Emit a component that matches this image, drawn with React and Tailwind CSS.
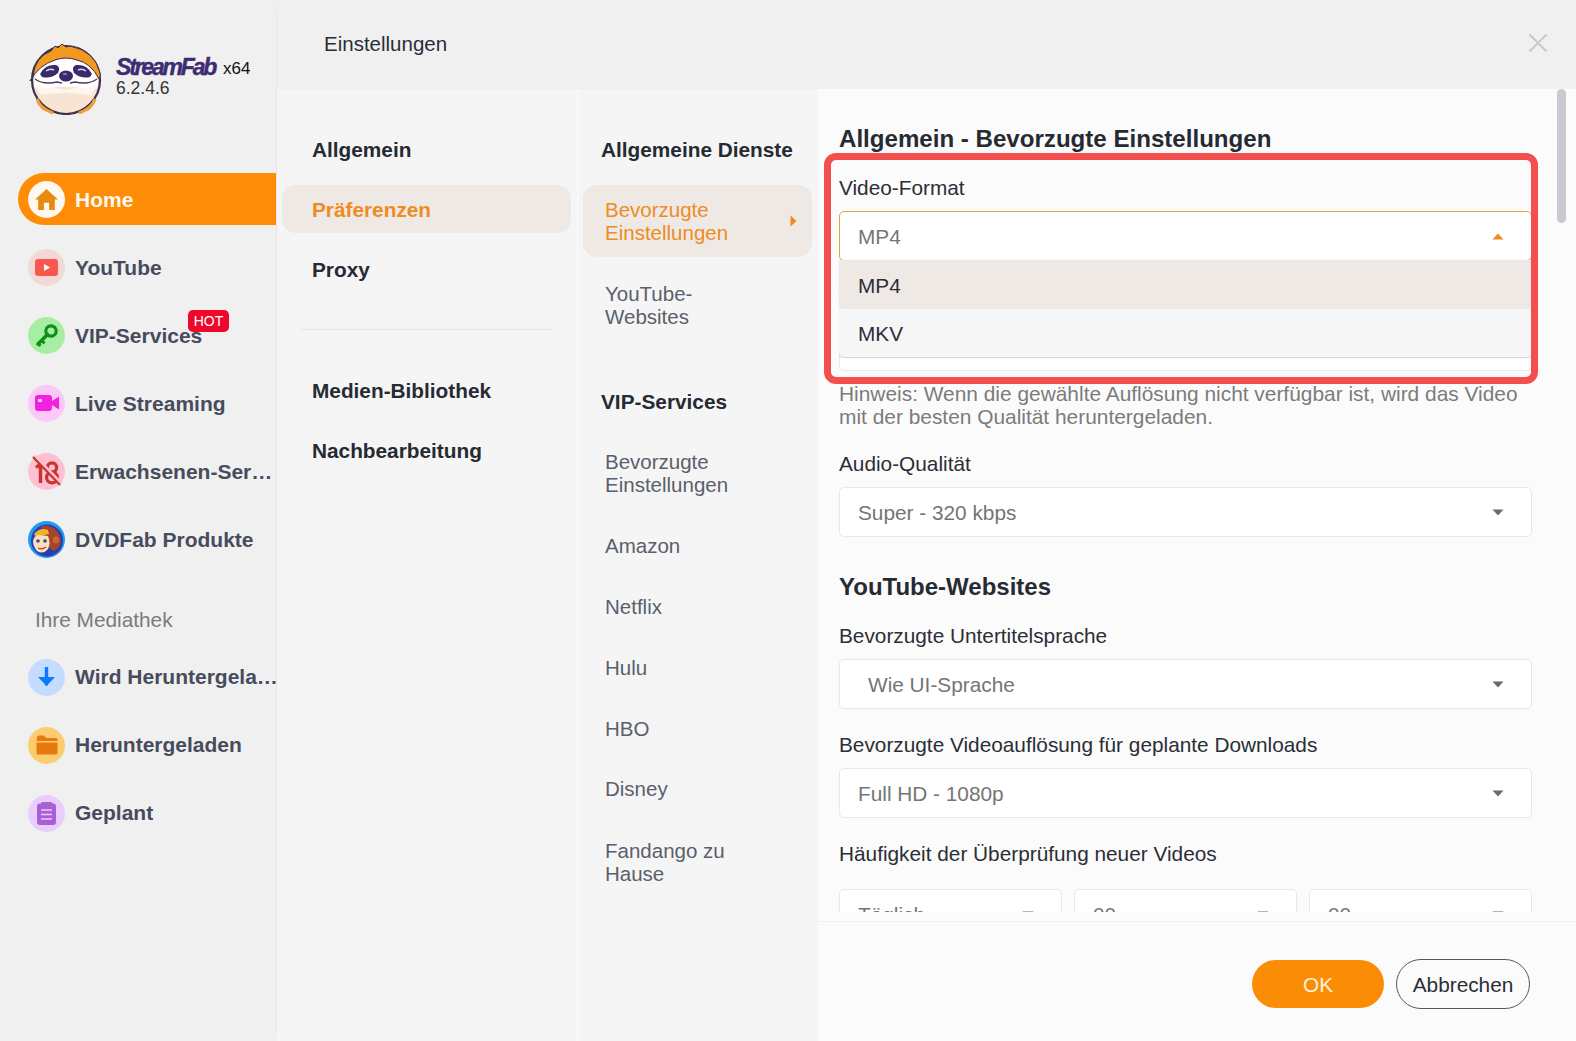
const Caret = ({ up }) => (
  <svg width="12" height="7" viewBox="0 0 12 7" className="shrink-0">
    {up ? <path d="M6 0.5 L11.5 6.5 H0.5 Z" fill="#f08a1c" /> : <path d="M0.5 0.5 H11.5 L6 6.5 Z" fill="#6b6b6b" />}
  </svg>
);

const Select = ({ value, indent, className = "" }) => (
  <div className={`flex h-[50px] items-center justify-between rounded-[5px] border border-[#e8e8e8] bg-white pr-[27px] text-[#757575] ${indent ? "pl-[28px]" : "pl-[18px]"} ${className}`}>
    <span className="pt-[1px]">{value}</span>
    <Caret />
  </div>
);

const Label = ({ children, className = "" }) => (
  <div className={`flex h-[24px] items-center text-[#2b2e36] ${className}`}>{children}</div>
);

const Circle = ({ bg, children }) => (
  <span className={`flex h-[37px] w-[37px] shrink-0 items-center justify-center rounded-full ${bg}`}>{children}</span>
);

const HomeIcon = () => (
  <svg width="25" height="25" viewBox="0 0 24 24"><path d="M12 2 L23 12 H20 V22 H14.5 V15 H9.5 V22 H4 V12 H1 Z" fill="#e68a12" /></svg>
);
const YtIcon = () => (
  <svg width="23" height="17" viewBox="0 0 23 17"><rect width="23" height="17" rx="3" fill="#f8584c" /><path d="M9 5 L15 8.5 L9 12 Z" fill="#fff" /></svg>
);
const KeyIcon = () => (
  <svg width="24" height="24" viewBox="0 0 24 24">
    <circle cx="16" cy="8" r="5.2" fill="none" stroke="#0f8f1a" strokeWidth="3.2" />
    <path d="M12.5 11.5 L3 21" stroke="#0f8f1a" strokeWidth="3.6" strokeLinecap="round" />
    <path d="M6.5 17 L9.5 20.5 M3 20 L5.5 23" stroke="#0f8f1a" strokeWidth="2.8" />
  </svg>
);
const CamIcon = () => (
  <svg width="24" height="16" viewBox="0 0 24 16"><rect width="17" height="16" rx="3" fill="#f221df" /><path d="M17 6 L24 1.5 V14.5 L17 10 Z" fill="#f221df" /><rect x="3" y="4" width="4" height="3" fill="#fcc8f8" /></svg>
);
const AdultIcon = () => (
  <svg width="37" height="37" viewBox="0 0 37 37">
    <path d="M8 14.5 L12.5 11 V30" fill="none" stroke="#c9342c" strokeWidth="3.4" />
    <circle cx="24" cy="14.5" r="4.6" fill="none" stroke="#c9342c" strokeWidth="3.2" />
    <circle cx="24" cy="24.5" r="5.4" fill="none" stroke="#c9342c" strokeWidth="3.2" />
    <path d="M6 3 L33 31" stroke="#fdc1d2" strokeWidth="4.4" />
    <path d="M5 4 L32 32" stroke="#c9342c" strokeWidth="2.2" />
  </svg>
);
const MascotIcon = () => (
  <svg width="37" height="37" viewBox="0 0 37 37" className="shrink-0">
    <circle cx="18.5" cy="18.5" r="18.5" fill="#1f9bf0" />
    <circle cx="19" cy="19.5" r="16" fill="#2a3cb4" />
    <path d="M13 5 Q27 3 32 15 Q35 26 26 30 Q20 28 16 16 Z" fill="#a3452a" />
    <circle cx="28" cy="19" r="3.4" fill="#c9633a" />
    <path d="M6 13 Q12 6 20 9 L21 13 L8 16 Z" fill="#edb524" />
    <path d="M5 20 Q6 14 12 14 L20 15 Q23 22 20 28 Q15 34 9 30 Q5 25 5 20 Z" fill="#fbdfbd" />
    <circle cx="10" cy="20" r="1.8" fill="#24507c" /><circle cx="17" cy="20" r="1.8" fill="#24507c" />
    <path d="M10 27 Q14 29 18 26" stroke="#a5402a" strokeWidth="1.2" fill="none" />
  </svg>
);
const DownIcon = () => (
  <svg width="19" height="20" viewBox="0 0 19 20"><path d="M9.5 1 V17" stroke="#0a7bff" strokeWidth="3.4" strokeLinecap="round" /><path d="M1 10 H18 L9.5 19 Z" fill="#0a7bff" /></svg>
);
const FolderIcon = () => (
  <svg width="22" height="20" viewBox="0 0 22 20"><path d="M1 2 a1.5 1.5 0 0 1 1.5 -1.5 H8 L10.5 3 H20 a1.5 1.5 0 0 1 1.5 1.5 V6 H0.5 Z" fill="#e67a0e" /><path d="M0.5 7.5 H21.5 V18 a1.5 1.5 0 0 1 -1.5 1.5 H2 a1.5 1.5 0 0 1 -1.5 -1.5 Z" fill="#e67a0e" /></svg>
);
const ClipIcon = () => (
  <svg width="19" height="23" viewBox="0 0 19 23"><rect y="1.5" width="19" height="21.5" rx="3" fill="#a95fd6" /><rect x="4" y="0" width="11" height="3" rx="1" fill="#a95fd6" /><path d="M4 8 H15 M4 12.5 H15 M4 17 H15" stroke="#e9cdfc" strokeWidth="1.7" /></svg>
);

const Logo = () => (
  <svg width="74" height="72" viewBox="0 0 74 72" className="shrink-0">
    <circle cx="37" cy="37" r="34" fill="#f8e4d2" stroke="#3d2f4e" strokeWidth="2.2" />
    <path d="M8 56 Q12 66 24 70 L15 66 Q10 62 8 56 Z M66 56 Q62 66 50 70 L59 66 Q64 62 66 56 Z" fill="#eda03a" stroke="#eda03a" strokeWidth="3" />
    <path d="M5 38 Q8 18 37 16 Q66 18 69 38 Q70 48 58 46 Q37 41 16 46 Q4 48 5 38 Z" fill="#fff" />
    <path d="M7 41 Q14 46 26 45 L37 47 L48 45 Q60 46 67 41 Q66 48 62 52 Q37 48 12 52 Q8 48 7 41 Z" fill="#fdf6ee" />
    <path d="M1 38 L4 33 Q6 14 22 8 L26 3 L29 5 L33 1 L37 4 L41 3 Q66 8 71 30 Q72 33 70 36 Q62 20 48 17 Q37 13 26 17 Q10 22 1 38 Z" fill="#f29a1e" stroke="#3d2f4e" strokeWidth="1" strokeLinejoin="round" />
    <path d="M11 31 Q16 21 27 22 Q32 24 29 30 Q22 36 13 34 Z" fill="#3a2a6a" />
    <path d="M63 31 Q58 21 47 22 Q42 24 45 30 Q52 36 61 34 Z" fill="#3a2a6a" />
    <path d="M17 28 Q21 25 25 27" stroke="#d8d2ea" strokeWidth="1.4" fill="none" />
    <path d="M57 28 Q53 25 49 27" stroke="#d8d2ea" strokeWidth="1.4" fill="none" />
    <ellipse cx="37" cy="33" rx="7" ry="5.5" fill="#3a2a6a" />
    <ellipse cx="36" cy="31" rx="2.2" ry="1.1" fill="#8f84b8" />
    <path d="M6 36 Q14 42 28 39 L33 40 M68 36 Q60 42 46 39 L41 40" stroke="#4a3a5c" strokeWidth="1.4" fill="none" />
  </svg>
);

const NavItem = ({ icon, label, active, truncateW, badge, lower }) => (
  <div className={`relative flex h-[52px] items-center gap-[10px] ${active ? "ml-[18px] rounded-l-[26px] bg-[#ff8c06] pl-[10px] text-[#fff8ee]" : "ml-[28px] text-[#474c5c]"}`}>
    {icon}
    <span className={`shrink-0 whitespace-nowrap text-[21px] font-bold ${lower ? "" : "pt-[2px]"} ${truncateW || ""}`}>{label}</span>
    {badge && (
      <span className="absolute left-[160px] top-[1px] flex h-[22px] w-[41px] items-center justify-center rounded-[5px] bg-[#f0082c] text-[14px] text-white">HOT</span>
    )}
  </div>
);

const Sidebar = () => (
  <aside className="relative z-10 flex h-full w-[276px] shrink-0 flex-col bg-[#f0f0f0]">
    <div className="flex h-[173px] items-start pl-[29px] pt-[43px]">
      <Logo />
      <div className="ml-[13px] flex flex-col pt-[13px]">
        <div className="flex h-[22px] items-center">
          <span className="text-[23px] font-bold italic tracking-[-2.2px] text-[#3d2c72] [-webkit-text-stroke:0.4px_#3d2c72]">StreamFab</span>
          <span className="ml-[8px] mt-[4px] text-[17px] text-[#111]">x64</span>
        </div>
        <span className="-mt-[1px] text-[17.5px] leading-[22px] text-[#333]">6.2.4.6</span>
      </div>
    </div>
    <nav className="flex flex-col gap-[16px]">
      <NavItem active label="Home" icon={<Circle bg="bg-[#fff8ee]"><HomeIcon /></Circle>} />
      <NavItem label="YouTube" icon={<Circle bg="bg-[#f3d8d8]"><YtIcon /></Circle>} />
      <NavItem label="VIP-Services" badge icon={<Circle bg="bg-[#a6efa2]"><KeyIcon /></Circle>} />
      <NavItem label="Live Streaming" icon={<Circle bg="bg-[#fcc8f8]"><CamIcon /></Circle>} />
      <NavItem label="Erwachsenen-Services" truncateW="w-[199px] truncate" icon={<Circle bg="bg-[#fdc1d2]"><AdultIcon /></Circle>} />
      <NavItem label="DVDFab Produkte" icon={<MascotIcon />} />
    </nav>
    <div className="ml-[35px] mt-[41px] flex h-[28px] items-center text-[20.8px] text-[#7b7b7b]">Ihre Mediathek</div>
    <nav className="mt-[17px] flex flex-col gap-[16px]">
      <NavItem lower label="Wird Heruntergeladen" truncateW="w-[204px] truncate" icon={<Circle bg="bg-[#c4dcff]"><DownIcon /></Circle>} />
      <NavItem lower label="Heruntergeladen" icon={<Circle bg="bg-[#fccc70]"><FolderIcon /></Circle>} />
      <NavItem lower label="Geplant" icon={<Circle bg="bg-[#e9cdfc]"><ClipIcon /></Circle>} />
    </nav>
  </aside>
);

const Col2Item = ({ children, active }) => (
  <div className={`flex h-[48px] items-center rounded-[14px] pl-[30px] pt-[2px] text-[20.8px] font-bold ${active ? "bg-[#eee9e5] text-[#ee8c22]" : "text-[#262a33]"}`}>{children}</div>
);

const Col3Head = ({ children, className = "" }) => (
  <div className={`flex h-[48px] items-center pl-[18px] pt-[2px] text-[20.8px] font-bold text-[#262a33] ${className}`}>{children}</div>
);

const Col3Item = ({ children }) => (
  <div className="flex min-h-[48px] items-center pl-[22px] text-[20.5px] leading-[23px] text-[#5b5f6b]">{children}</div>
);

const Content = () => (
  <div className="relative flex min-w-0 flex-1 flex-col bg-[#fbfbfb]">
    <div className="relative h-[823px] shrink-0 overflow-hidden pl-[21px] pr-[44px] pt-[35px] text-[20.8px]">
      <div className="flex h-[30px] items-center pt-[1px] text-[24.1px] font-bold text-[#262a33]">Allgemein - Bevorzugte Einstellungen</div>
      <Label className="mt-[22px]">Video-Format</Label>
      <div className="relative mt-[11px]">
        <div className="flex h-[50px] items-center justify-between rounded-[5px] border border-[#e6a33c] bg-white pl-[18px] pr-[27px] text-[#757575]">
          <span className="pt-[2px]">MP4</span>
          <Caret up />
        </div>
        <div className="absolute left-0 right-0 top-[49px] z-10 overflow-hidden rounded-b-[5px] border-b border-[#d9d9d9] bg-[#f6f6f6] text-[#2b2e36] shadow-[0_0_1px_rgba(0,0,0,0.25)]">
          <div className="flex h-[49px] items-center rounded-[4px] bg-[#eee9e5] pl-[19px] pt-[2px]">MP4</div>
          <div className="flex h-[48px] items-center pl-[19px] pt-[2px]">MKV</div>
        </div>
      </div>
      <Label className="mt-[25px]">Video-Auflösung</Label>
      <Select value="Full HD - 1080p" className="mt-[11px]" />
      <p className="mt-[11px] text-[20.9px] leading-[23px] text-[#7b7b7b]">
        Hinweis: Wenn die gewählte Auflösung nicht verfügbar ist, wird das Video mit der besten Qualität heruntergeladen.
      </p>
      <Label className="mt-[24px]">Audio-Qualität</Label>
      <Select value="Super - 320 kbps" className="mt-[11px]" />
      <div className="mt-[34px] flex h-[30px] items-center pt-[1px] text-[24px] font-bold text-[#262a33]">YouTube-Websites</div>
      <Label className="mt-[23px]">Bevorzugte Untertitelsprache</Label>
      <Select value="Wie UI-Sprache" indent className="mt-[11px]" />
      <Label className="mt-[24px]">Bevorzugte Videoauflösung für geplante Downloads</Label>
      <Select value="Full HD - 1080p" className="mt-[11px]" />
      <Label className="mt-[24px]">Häufigkeit der Überprüfung neuer Videos</Label>
      <div className="mt-[23px] grid grid-cols-3 gap-[12px]">
        <Select value="Täglich" />
        <Select value="00" />
        <Select value="00" />
      </div>
      <div className="absolute left-[6px] top-[64px] z-20 h-[231px] w-[714px] rounded-[12px] border-[7px] border-[#f44f4f]" />
      <div className="absolute right-[10px] top-0 h-[134px] w-[9px] rounded-full bg-[#c9c9d2]" />
    </div>
    <div className="mt-[9px] flex flex-1 items-start justify-end gap-[12px] border-t border-[#f0f0f0] pr-[46px] pt-[38px] text-[20.8px]">
      <button className="flex h-[48px] w-[132px] items-center justify-center rounded-full bg-[#fb8c06] pt-[2px] text-[#fff3dd]">OK</button>
      <button className="-mt-[1px] flex h-[50px] w-[134px] items-center justify-center rounded-full border border-[#55575f] pt-[2px] text-[#2b2e36]">Abbrechen</button>
    </div>
  </div>
);

export default function App() {
  return (
    <div className="flex h-[1041px] w-[1576px] overflow-hidden bg-[#f0f0f0] font-['Liberation_Sans',Arial,sans-serif]">
      <Sidebar />
      <main className="flex min-w-0 flex-1 flex-col rounded-l-[10px] border-l border-[#e6e6e6]">
        <header className="flex h-[89px] shrink-0 items-center justify-between rounded-tl-[10px] bg-[#f0f0f0] pl-[47px] pr-[28px]">
          <span className="text-[20.5px] text-[#2b2e36]">Einstellungen</span>
          <svg width="20" height="20" viewBox="0 0 20 20" className="mb-[4px]"><path d="M1.5 1.5 L18.5 18.5 M18.5 1.5 L1.5 18.5" stroke="#c9c9c9" strokeWidth="2" /></svg>
        </header>
        <div className="flex min-h-0 flex-1">
          <div className="flex w-[301px] shrink-0 flex-col gap-[12px] border-r border-[#fafafa] bg-[#f5f5f5] pl-[5px] pr-[6px] pt-[36px]">
            <Col2Item>Allgemein</Col2Item>
            <Col2Item active>Präferenzen</Col2Item>
            <Col2Item>Proxy</Col2Item>
            <div className="mx-[18px] mt-[24px] h-px bg-[#e6e6e6]" />
            <div className="mt-[24px]"><Col2Item>Medien-Bibliothek</Col2Item></div>
            <Col2Item>Nachbearbeitung</Col2Item>
          </div>
          <div className="flex w-[240px] shrink-0 flex-col bg-[#f5f5f5] pl-[5px] pr-[6px] pt-[36px]">
            <Col3Head>Allgemeine Dienste</Col3Head>
            <div className="mt-[12px] flex h-[72px] items-center justify-between rounded-[14px] bg-[#eee9e5] pl-[22px] pr-[15px] text-[20.5px] leading-[23px] text-[#ee8c22]">
              <span>Bevorzugte<br />Einstellungen</span>
              <svg width="7" height="12" viewBox="0 0 7 12"><path d="M0.5 0.5 L6.5 6 L0.5 11.5 Z" fill="#f08a1c" /></svg>
            </div>
            <div className="mt-[12px] flex h-[72px] items-center"><Col3Item>YouTube-<br />Websites</Col3Item></div>
            <Col3Head className="mt-[36px]">VIP-Services</Col3Head>
            <div className="mt-[12px] flex flex-col gap-[12.8px]">
              <div className="flex h-[72px] items-center"><Col3Item>Bevorzugte<br />Einstellungen</Col3Item></div>
              <Col3Item>Amazon</Col3Item>
              <Col3Item>Netflix</Col3Item>
              <Col3Item>Hulu</Col3Item>
              <Col3Item>HBO</Col3Item>
              <Col3Item>Disney</Col3Item>
              <div className="flex h-[72px] items-center"><Col3Item>Fandango zu<br />Hause</Col3Item></div>
            </div>
          </div>
          <Content />
        </div>
      </main>
    </div>
  );
}
